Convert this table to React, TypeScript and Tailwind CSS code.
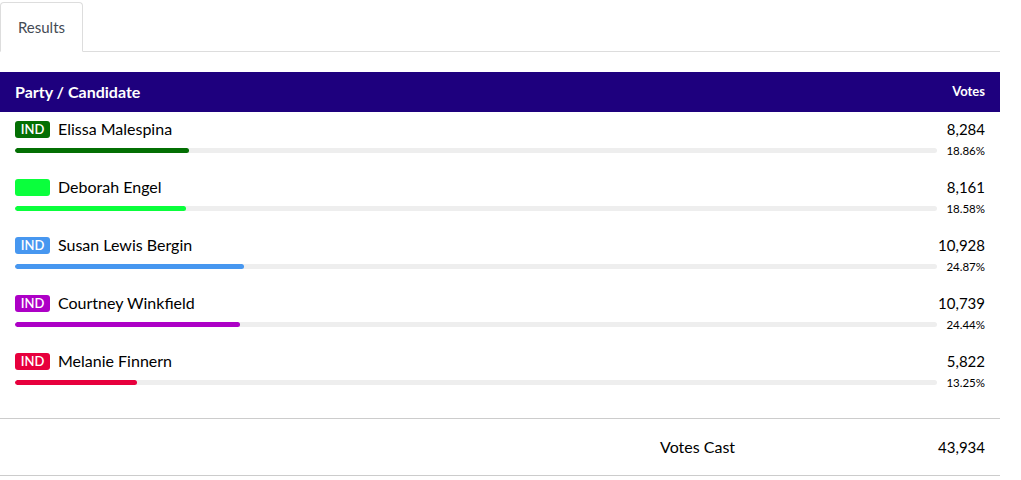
const candidates = [
  { name: "Elissa Malespina", badge: "IND", color: "#036f03", votes: "8,284", pct: 18.86 },
  { name: "Deborah Engel", badge: "", color: "#0aff3c", votes: "8,161", pct: 18.58 },
  { name: "Susan Lewis Bergin", badge: "IND", color: "#4797f0", votes: "10,928", pct: 24.87 },
  { name: "Courtney Winkfield", badge: "IND", color: "#ad00c6", votes: "10,739", pct: 24.44 },
  { name: "Melanie Finnern", badge: "IND", color: "#e7003d", votes: "5,822", pct: 13.25 },
]

export default function App() {
  return (
    <div className="w-[1021px] h-[480px] bg-white text-black overflow-hidden font-['Lato','Open_Sans',sans-serif]">
      <div className="w-[1000px]">
        {/* Tabs */}
        <div className="flex pt-[2px] border-b border-[#dddddd]">
          <div className="-mb-px h-[50px] w-[83px] flex items-center justify-center rounded-t border border-[#dddddd] border-b-white bg-white text-[15px] text-[#444b55]">
            Results
          </div>
        </div>

        {/* Header */}
        <div className="mt-[20px] h-[40px] bg-[#1e007e] px-[15px] flex items-center justify-between text-white">
          <span className="text-[16px] font-bold">Party / Candidate</span>
          <span className="text-[13px] font-bold">Votes</span>
        </div>

        {/* Rows */}
        <div className="pb-[16px]">
          {candidates.map((c) => (
            <div key={c.name} className="h-[58px] px-[15px] pt-[8px]">
              <div className="flex items-center justify-between h-[18px]">
                <div className="flex items-center gap-[8px]">
                  <span
                    className="w-[35px] h-[17px] rounded-[3px] flex items-center justify-center text-[13px] leading-none font-semibold text-white"
                    style={{ backgroundColor: c.color }}
                  >
                    {c.badge}
                  </span>
                  <span className="text-[16px]">{c.name}</span>
                </div>
                <span className="text-[15px]">{c.votes}</span>
              </div>
              <div className="flex items-center mt-[4px]">
                <div className="flex-1 h-[5px] rounded-full bg-[#eeeeee] overflow-hidden">
                  <div className="h-full rounded-full" style={{ width: `${c.pct}%`, backgroundColor: c.color }} />
                </div>
                <span className="w-[48px] text-right text-[11.5px]">{c.pct.toFixed(2)}%</span>
              </div>
            </div>
          ))}
        </div>

        {/* Footer */}
        <div className="border-t border-b border-[#cccccc] h-[58px] px-[15px] flex items-center justify-end">
          <span className="mr-[203px] text-[16px]">Votes Cast</span>
          <span className="text-[15px]">43,934</span>
        </div>
      </div>
    </div>
  )
}
